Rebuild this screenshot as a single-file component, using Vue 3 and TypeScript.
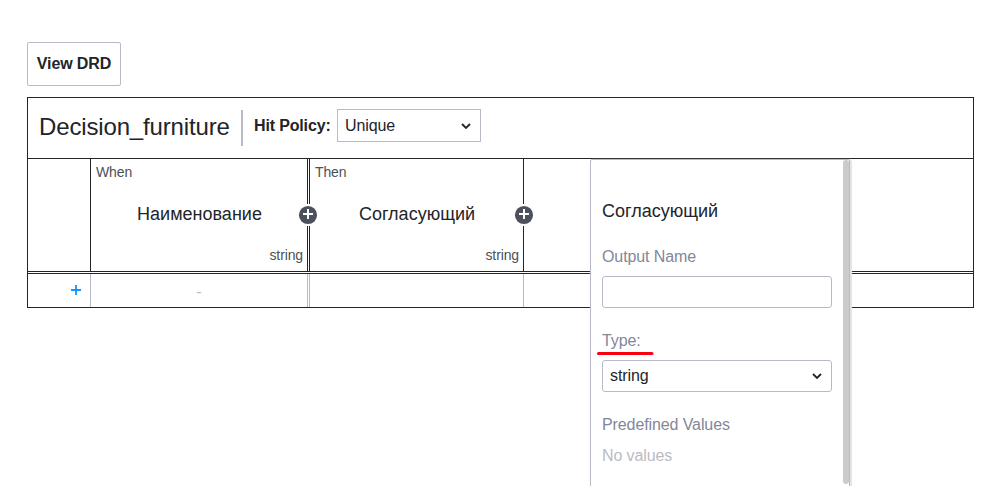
<script setup lang="ts">
import { ref } from 'vue'

interface Clause {
  kind: 'input' | 'output'
  label: string
  name: string
  type: string
  cell: string
}

const hitPolicy = ref('Unique')
const outputName = ref('')
const clauses: Clause[] = [
  { kind: 'input', label: 'When', name: 'Наименование', type: 'string', cell: '-' },
  { kind: 'output', label: 'Then', name: 'Согласующий', type: 'string', cell: '' },
]
</script>

<template>
  <div class="editor">
    <button class="view-drd">View DRD</button>

    <section class="decision">
      <header class="head">
        <h3 class="title">Decision_furniture</h3>
        <span class="separator"></span>
        <span class="policy-label">Hit Policy:</span>
        <div class="select policy">
          <span>{{ hitPolicy }}</span>
          <svg class="chevron" viewBox="0 0 10 6"><path d="M1 1 L5 5 L9 1" /></svg>
        </div>
      </header>

      <div class="row clauses">
        <div class="index"></div>
        <div v-for="c in clauses" :key="c.kind" class="cell clause" :class="c.kind">
          <span class="label">{{ c.label }}</span>
          <span class="name">{{ c.name }}</span>
          <span class="type">{{ c.type }}</span>
          <span class="add-clause">
            <svg viewBox="0 0 22 22"><circle cx="11" cy="11" r="9.1" /><path d="M11 5 V15 M6 10 H16" /></svg>
          </span>
        </div>
        <div class="rest"></div>
      </div>

      <div class="row rules">
        <div class="index">
          <svg class="add-rule" viewBox="0 0 10 10"><path d="M5 0 V10 M0 5 H10" /></svg>
        </div>
        <div v-for="c in clauses" :key="c.kind" class="cell rule" :class="c.kind"><span>{{ c.cell }}</span></div>
        <div class="rest"></div>
      </div>
    </section>

    <aside class="panel">
      <div class="panel-body">
        <h4 class="panel-title">Согласующий</h4>
        <label class="field-label">Output Name</label>
        <input v-model="outputName" class="field" />
        <label class="field-label type-label">Type:<svg class="mark" viewBox="0 0 58 5"><path d="M2.5 2.5 H56" /></svg></label>
        <div class="select field">
          <span>string</span>
          <svg class="chevron" viewBox="0 0 10 6"><path d="M1 1 L5 5 L9 1" /></svg>
        </div>
        <div class="field-label">Predefined Values</div>
        <div class="empty">No values</div>
      </div>
      <div class="scrollbar"></div>
    </aside>
  </div>
</template>

<style>
body {
  background: #fff;
  overflow: hidden;
}
</style>

<style scoped>
.editor {
  position: relative;
  box-sizing: border-box;
  width: 981px;
  height: 486px;
  padding: 42px 7px 0 27px;
  overflow: hidden;
  background: #fff;
  color: #22242a;
  font-family: "Liberation Sans", Arial, sans-serif;
  font-size: 16px;
}
.editor *,
.editor *::before {
  box-sizing: border-box;
}
.view-drd {
  display: block;
  width: 94px;
  height: 44px;
  padding: 0 0 1px;
  border: 1px solid #b9bac8;
  border-radius: 2px;
  background: #fff;
  color: inherit;
  font: bold 16px "Liberation Sans", Arial, sans-serif;
  letter-spacing: -0.12px;
  white-space: nowrap;
}
.decision {
  width: 947px;
  height: 211px;
  margin-top: 11px;
  border: 1px solid #22242a;
}
.head {
  display: flex;
  align-items: flex-start;
  height: 61px;
  padding: 11px 11px 0;
  border-bottom: 1px solid #22242a;
}
.title {
  width: 202px;
  margin: 0;
  padding-top: 4px;
  font-size: 24px;
  font-weight: 400;
  line-height: 28px;
  letter-spacing: -0.15px;
}
.separator {
  width: 2px;
  height: 36px;
  margin-top: 1px;
  background: #b9bac8;
}
.policy-label {
  width: 83px;
  margin-left: 11px;
  font-weight: 700;
  line-height: 33px;
  letter-spacing: -0.15px;
  white-space: nowrap;
}
.select {
  display: flex;
  align-items: center;
  justify-content: space-between;
  border: 1px solid #b9bac8;
  padding: 0 9px 0 7px;
  letter-spacing: -0.1px;
}
.policy {
  width: 144px;
  height: 33px;
}
.chevron {
  width: 10px;
  height: 6px;
  fill: none;
  stroke: #22242a;
  stroke-width: 1.8;
}
.row {
  display: grid;
  grid-template-columns: 62px 217px 216px 1fr;
}
.clauses {
  height: 115px;
  border-bottom: 3px double #22242a;
}
.cell {
  position: relative;
}
.clause {
  display: flex;
  flex-direction: column;
  padding: 4px 4px 0 5px;
  border-left: 1px solid #22242a;
  font-size: 14px;
  line-height: 18px;
  letter-spacing: -0.12px;
  color: #4d5058;
}
.clause.output {
  border-left: 3px double #22242a;
}
.name {
  margin: 23px 0 22px;
  color: #22242a;
  font-size: 18px;
  line-height: 20px;
  letter-spacing: 0;
  text-align: center;
}
.type {
  text-align: right;
}
.add-clause {
  position: absolute;
  z-index: 1;
  top: 45px;
  right: -12px;
  width: 22px;
  height: 22px;
  background: #fff;
}
.add-clause svg {
  display: block;
  width: 22px;
  height: 22px;
}
.add-clause circle {
  fill: #4d515d;
}
.add-clause path {
  stroke: #fff;
  stroke-width: 2;
}
.clauses .rest {
  border-left: 1px solid #22242a;
}
.rules {
  height: 33px;
}
.rules .index {
  display: flex;
  align-items: center;
  justify-content: flex-end;
  padding: 0 9px 1px 0;
}
.add-rule {
  width: 10px;
  height: 10px;
  stroke: #1593ff;
  stroke-width: 1.8;
}
.rule {
  display: flex;
  align-items: center;
  justify-content: center;
  height: 33px;
  padding-top: 2px;
  border-left: 1px solid #b9bac8;
  color: #b9bac8;
  line-height: 18px;
}
.rule.output {
  border-left: 3px double #b9bac8;
}
.rules .rest {
  border-left: 1px solid #b9bac8;
}
.panel {
  position: absolute;
  z-index: 2;
  top: 159px;
  left: 590px;
  display: flex;
  width: 260px;
  height: 340px;
  border: 1px solid #b9bac8;
  border-radius: 2px;
  background: #fff;
  box-shadow: 1px 1px 1px 1px #e4e4e8;
}
.panel-body {
  flex: 1;
  padding: 41px 11px 0;
}
.panel-title {
  margin: 0 0 26px;
  font-size: 18px;
  font-weight: 400;
  line-height: 20px;
}
.field-label {
  display: block;
  height: 20px;
  margin-bottom: 9px;
  color: #838799;
  line-height: 20px;
  letter-spacing: -0.1px;
}
.type-label {
  position: relative;
}
.mark {
  position: absolute;
  top: 20px;
  left: -6px;
  width: 58px;
  height: 5px;
  fill: none;
  stroke: #f90011;
  stroke-width: 3;
  stroke-linecap: round;
}
.field {
  width: 230px;
  height: 32px;
  margin-bottom: 23px;
  border: 1px solid #b9bac8;
  border-radius: 3px;
  background: #fff;
}
input.field {
  display: block;
  padding: 0 7px;
  outline: none;
}
.empty {
  margin-top: 10px;
  color: #b9bbc4;
  line-height: 22px;
  letter-spacing: -0.1px;
}
.scrollbar {
  width: 6px;
  height: 324px;
  border-radius: 3px;
  background: #cbcbcb;
}
</style>
